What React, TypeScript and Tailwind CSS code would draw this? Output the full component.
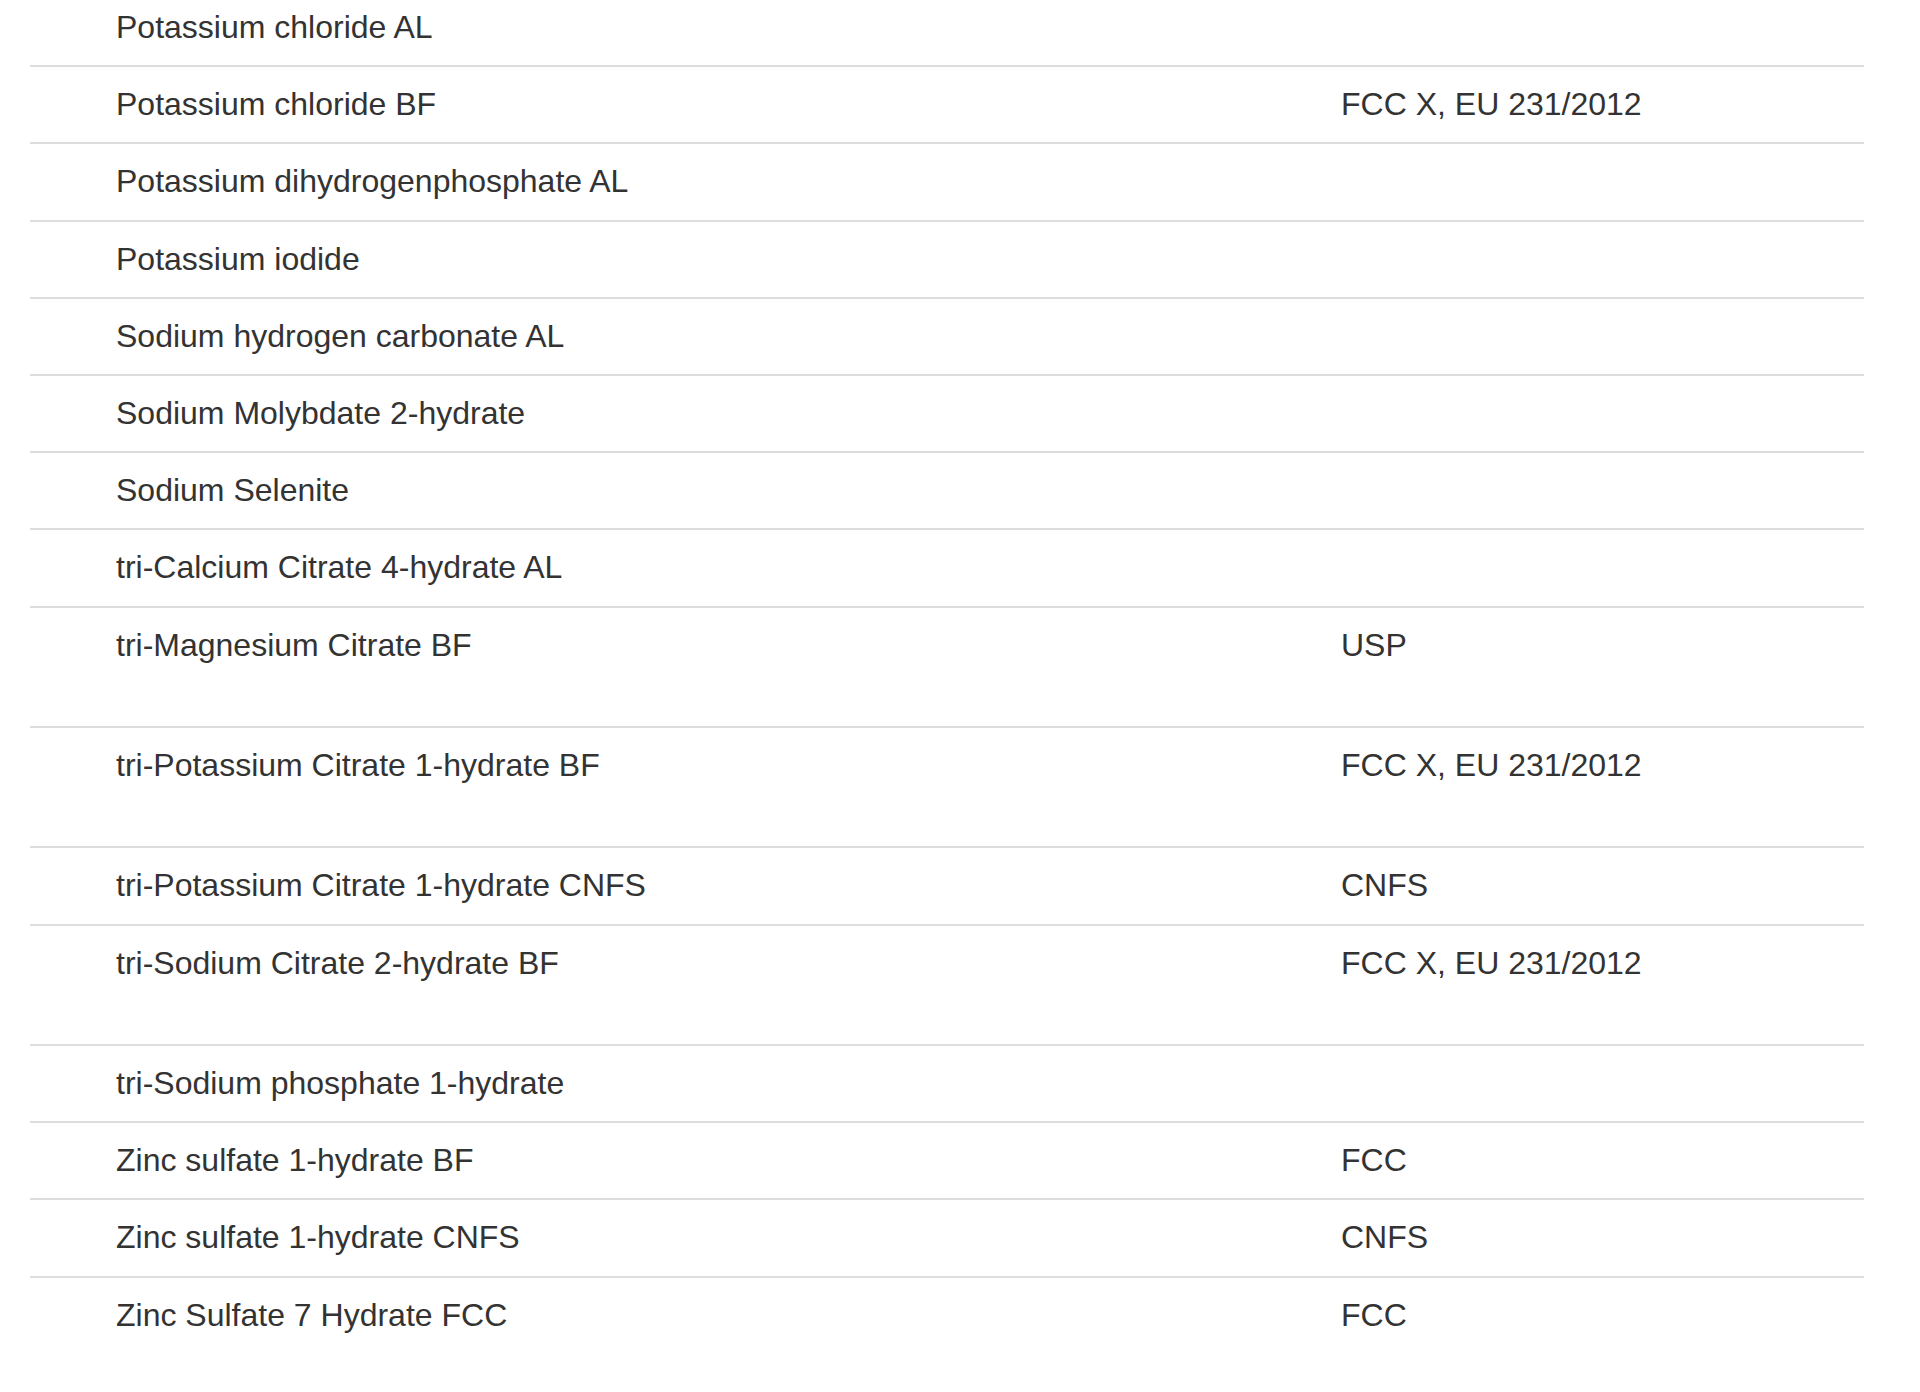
const rows: { name: string; spec?: string; tall?: boolean }[] = [
  { name: "Potassium chloride AL" },
  { name: "Potassium chloride BF", spec: "FCC X, EU 231/2012" },
  { name: "Potassium dihydrogenphosphate AL" },
  { name: "Potassium iodide" },
  { name: "Sodium hydrogen carbonate AL" },
  { name: "Sodium Molybdate 2-hydrate" },
  { name: "Sodium Selenite" },
  { name: "tri-Calcium Citrate 4-hydrate AL" },
  { name: "tri-Magnesium Citrate BF", spec: "USP", tall: true },
  { name: "tri-Potassium Citrate 1-hydrate BF", spec: "FCC X, EU 231/2012", tall: true },
  { name: "tri-Potassium Citrate 1-hydrate CNFS", spec: "CNFS" },
  { name: "tri-Sodium Citrate 2-hydrate BF", spec: "FCC X, EU 231/2012", tall: true },
  { name: "tri-Sodium phosphate 1-hydrate" },
  { name: "Zinc sulfate 1-hydrate BF", spec: "FCC" },
  { name: "Zinc sulfate 1-hydrate CNFS", spec: "CNFS" },
  { name: "Zinc Sulfate 7 Hydrate FCC", spec: "FCC" },
];

const App = () => {
  return (
    <main
      className="bg-white min-h-screen h-[1392px] overflow-hidden text-[#333333]"
      style={{ fontFamily: '"Liberation Sans", Arial, sans-serif' }}
    >
      <div className="-mt-[10px] ml-[30px] w-[1834px]">
        {rows.map((row, i) => (
          <div
            key={row.name}
            className={`grid grid-cols-[1311px_1fr] py-4 text-[32px] leading-[43.2px] ${
              i < rows.length - 1 ? "border-b-2 border-[#dddddd]" : ""
            }`}
          >
            <div className={`pl-[86px] ${row.tall ? "h-[86.4px]" : ""}`}>{row.name}</div>
            <div>{row.spec}</div>
          </div>
        ))}
      </div>
    </main>
  );
};

export default App;
